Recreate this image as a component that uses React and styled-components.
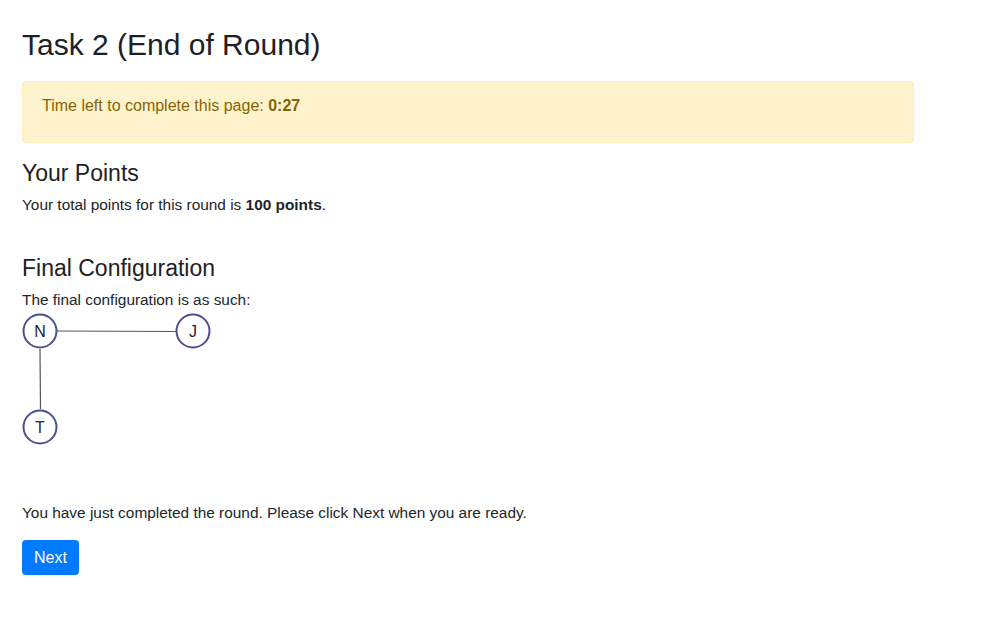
import React from "react";
import styled, { createGlobalStyle } from "styled-components";

const GlobalStyle = createGlobalStyle`
  html, body {
    margin: 0;
    padding: 0;
    background: #fff;
  }
  body {
    font-family: "Liberation Sans", Arial, sans-serif;
    color: #212529;
  }
`;

const Page = styled.div`
  width: 892px;
  padding: 27px 22px 40px 22px;
`;

const Title = styled.h2`
  margin: 0 0 18px 0;
  font-size: 30px;
  font-weight: 500;
  line-height: 36px;
  color: #1d2125;
`;

const Alert = styled.div`
  box-sizing: border-box;
  height: 62px;
  padding: 13px 19px;
  background: #fff3cd;
  border: 1px solid #ffeeba;
  border-radius: 4px;
  color: #856404;
  font-size: 16px;
  line-height: 22px;
  margin-bottom: 16px;
`;

const Section = styled.section`
  margin-bottom: ${(p) => p.$gap || 0}px;
`;

const Heading = styled.h4`
  margin: 0 0 7px 0;
  font-size: 23px;
  font-weight: 500;
  line-height: 28px;
  color: #1d2125;
`;

const Text = styled.p`
  margin: 0;
  font-size: 15.4px;
  line-height: 22px;
`;

const Graph = styled.svg`
  display: block;
  margin-top: 2px;
`;

const Button = styled.button`
  display: block;
  margin-top: 16px;
  height: 35px;
  padding: 0 12px;
  border: none;
  border-radius: 4px;
  background: #007bff;
  color: #fff;
  font-family: inherit;
  font-size: 16px;
  cursor: pointer;
`;

const nodes = [
  { id: "N", x: 18, y: 18 },
  { id: "J", x: 171, y: 18 },
  { id: "T", x: 18, y: 114 },
];

const Node = ({ x, y, id }) => (
  <g>
    <circle cx={x} cy={y} r="16.5" fill="#fff" stroke="#4b4f8c" strokeWidth="2" />
    <text
      x={x}
      y={y + 5.5}
      textAnchor="middle"
      fontSize="16"
      fontFamily="Liberation Sans, Arial, sans-serif"
      fill="#212529"
    >
      {id}
    </text>
  </g>
);

export default function App() {
  return (
    <>
      <GlobalStyle />
      <Page>
        <Title>Task 2 (End of Round)</Title>
        <Alert>
          Time left to complete this page: <b>0:27</b>
        </Alert>
        <Section $gap={38}>
          <Heading>Your Points</Heading>
          <Text>
            Your total points for this round is <b>100 points</b>.
          </Text>
        </Section>
        <Section $gap={55}>
          <Heading>Final Configuration</Heading>
          <Text>The final configuration is as such:</Text>
          <Graph width="200" height="134" viewBox="0 0 200 134">
            <line x1="35" y1="18" x2="155" y2="18.5" stroke="#555" strokeWidth="1" />
            <line x1="18" y1="36" x2="18.5" y2="96" stroke="#555" strokeWidth="1.2" />
            {nodes.map((n) => (
              <Node key={n.id} {...n} />
            ))}
          </Graph>
        </Section>
        <Text>You have just completed the round. Please click Next when you are ready.</Text>
        <Button>Next</Button>
      </Page>
    </>
  );
}
